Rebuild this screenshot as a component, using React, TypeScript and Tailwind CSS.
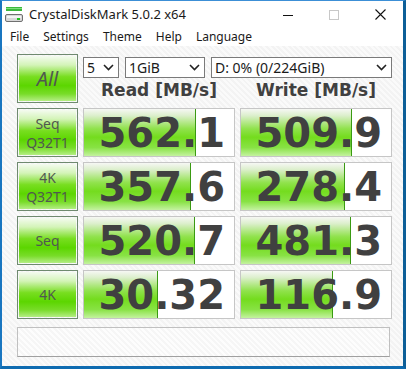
import React from "react";

const ui = { fontFamily: '"Noto Sans", "Open Sans", sans-serif' };
const num = { fontFamily: '"DejaVu Sans", Verdana, sans-serif' };

function LabelBtn({ children, big }: { children: React.ReactNode; big?: boolean }) {
  return (
    <div className="h-full w-[61px] border border-[#6f8a6f] p-px">
      <div
        className={`flex h-full w-full flex-col items-center justify-center bg-[linear-gradient(180deg,#f4fbf0_0%,#d4f4b8_20%,#78de20_46%,#5cd600_66%,#78dc28_84%,#b4ee84_100%)] text-[#505850] ${big ? "text-[20px]" : "text-[14px] leading-[19px]"}`}
        style={ui}
      >
        {children}
      </div>
    </div>
  );
}

function ValueBox({ value, bar }: { value: string; bar: number }) {
  return (
    <div className="relative h-full w-[152px] border border-[#c6c6c6] bg-white">
      <div
        className="absolute bottom-0 left-0 top-0 border-r border-[#3a9a12] bg-[linear-gradient(180deg,#f6f7f4_0%,#dcefcc_14%,#90e24c_42%,#74dc1e_60%,#88e244_82%,#c4f2a0_100%)]"
        style={{ width: bar }}
      />
      <div
        className="relative flex h-full items-center justify-end pr-[9px] text-[40px] font-bold leading-none text-[#404040]"
        style={num}
      >
        {value}
      </div>
    </div>
  );
}

function Select({ w, text }: { w: string; text: string }) {
  return (
    <div
      className={`flex h-[21px] ${w} items-center justify-between border border-[#7a7a7a] bg-white pl-[3px] pr-[4px] text-[14px] text-[#1a1a1a]`}
      style={ui}
    >
      <span className="leading-none">{text}</span>
      <svg width="11" height="7" viewBox="0 0 11 7">
        <path d="M1 1 L5.5 5.5 L10 1" stroke="#222" strokeWidth="1.6" fill="none" />
      </svg>
    </div>
  );
}

export default function App() {
  const rows = [
    { label: (<><span>Seq</span><span>Q32T1</span></>), r: "562.1", rb: 112, w: "509.9", wb: 111 },
    { label: (<><span>4K</span><span>Q32T1</span></>), r: "357.6", rb: 107, w: "278.4", wb: 104 },
    { label: <span>Seq</span>, r: "520.7", rb: 111, w: "481.3", wb: 110 },
    { label: <span>4K</span>, r: "30.32", rb: 74, w: "116.9", wb: 92 },
  ];
  return (
    <div className="flex h-[369px] w-[406px] flex-col border-b-[3px] border-l-2 border-r-[3px] border-t border-b-[#0e6bb0] border-l-[#1976c0] border-r-[#0d5f98] border-t-[#3c8fd6] bg-white">
      {/* title bar */}
      <div className="flex h-[27px] items-center bg-white" style={ui}>
        <svg width="18" height="16" viewBox="0 0 18 16" className="ml-[3px] mt-[1px]">
          <rect x="1" y="0" width="16" height="4" fill="#3cb83c" />
          <rect x="1" y="1" width="16" height="1" fill="#7ee07e" />
          <rect x="0.5" y="7.5" width="17" height="7" rx="1.5" fill="#d8d8d8" stroke="#707070" />
          <rect x="2" y="9" width="14" height="2" fill="#f4f4f4" />
          <rect x="12" y="11" width="3" height="2" fill="#22c022" />
        </svg>
        <span className="ml-[6px] text-[13px] text-[#1a1a1a]">CrystalDiskMark 5.0.2 x64</span>
        <div className="flex-1" />
        <div className="flex w-[46px] justify-center">
          <div className="mt-[1px] h-px w-[10px] bg-[#111]" />
        </div>
        <div className="flex w-[46px] justify-center">
          <div className="h-[10px] w-[10px] border border-[#c8c8c8]" />
        </div>
        <div className="flex w-[46px] justify-center">
          <svg width="11" height="11" viewBox="0 0 11 11">
            <path d="M0.5 0.5 L10.5 10.5 M10.5 0.5 L0.5 10.5" stroke="#111" strokeWidth="1.1" />
          </svg>
        </div>
      </div>
      {/* menu */}
      <div className="flex h-[18px] items-center gap-[14px] pl-[8px] text-[12px] text-[#1a1a1a]" style={ui}>
        <span>File</span>
        <span>Settings</span>
        <span>Theme</span>
        <span>Help</span>
        <span>Language</span>
      </div>
      {/* content */}
      <div className="flex flex-1 flex-col bg-[repeating-linear-gradient(45deg,#f3f3f3_0px,#f3f3f3_2px,#fafafa_2px,#fafafa_4px)] pl-[15px] pt-[8px]">
        <div className="flex h-[49px] gap-[5px]">
          <LabelBtn big>
            <span className="italic">All</span>
          </LabelBtn>
          <div className="flex flex-col">
            <div className="mt-[3px] flex gap-[6px]">
              <Select w="w-[36px]" text="5" />
              <Select w="w-[80px]" text="1GiB" />
              <Select w="w-[181px]" text="D: 0% (0/224GiB)" />
            </div>
            <div className="mt-[4px] flex text-[17px] font-bold leading-none text-[#404040]" style={num}>
              <div className="w-[152px] text-center">Read [MB/s]</div>
              <div className="ml-[5px] w-[152px] text-center">Write [MB/s]</div>
            </div>
          </div>
        </div>
        <div className="mt-[5px] flex flex-col gap-[5px]">
          {rows.map((r, i) => (
            <div key={i} className="flex h-[49px] gap-[5px]">
              <LabelBtn>{r.label}</LabelBtn>
              <ValueBox value={r.r} bar={r.rb} />
              <ValueBox value={r.w} bar={r.wb} />
            </div>
          ))}
        </div>
        <div className="mt-[8px] h-[30px] w-[373px] border border-[#c0c0c0] border-b-[#a0a0a0] bg-[repeating-linear-gradient(45deg,#f6f6f6_0px,#f6f6f6_2px,#fdfdfd_2px,#fdfdfd_4px)]" />
      </div>
    </div>
  );
}
